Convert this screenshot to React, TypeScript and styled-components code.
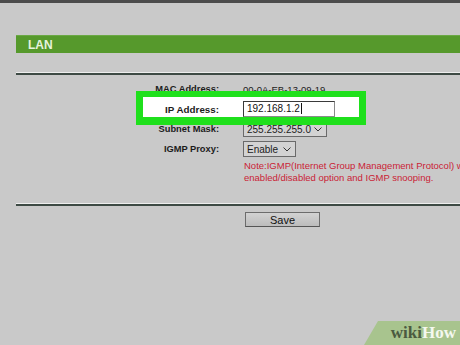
import styled, { createGlobalStyle } from "styled-components";

const GlobalStyle = createGlobalStyle`
  html, body {
    margin: 0;
    padding: 0;
    background: #c9c9c9;
    font-family: "Liberation Sans", Arial, sans-serif;
  }
`;

const Page = styled.div`
  position: relative;
  width: 460px;
  height: 345px;
  overflow: hidden;
  background: #c9c9c9;
`;

const TopBar = styled.div`
  height: 3px;
  background: #4c4c4c;
`;

const Content = styled.div`
  padding-left: 16px;
`;

const SectionHeader = styled.div`
  margin-top: 32px;
  height: 18px;
  display: flex;
  align-items: center;
  padding-left: 12px;
  background: #56992c;
  border-top: 1px solid #6aa844;
  box-sizing: border-box;
  color: #e6f3dc;
  font-size: 12px;
  font-weight: bold;
`;

const Divider = styled.div<{ $gap: number }>`
  margin-top: ${(p) => p.$gap}px;
  border-top: 1px solid #eeeeee;
  border-bottom: 2px solid #3d4a44;
`;

const Form = styled.div`
  margin-top: 4px;
`;

const Row = styled.div<{ $highlight?: boolean }>`
  position: relative;
  display: grid;
  grid-template-columns: 203px 1fr;
  column-gap: 24px;
  align-items: center;
  height: 20px;
  z-index: ${(p) => (p.$highlight ? 1 : 0)};

  ${(p) =>
    p.$highlight &&
    `
    &::before {
      content: "";
      position: absolute;
      left: 120px;
      top: -8px;
      width: 230px;
      height: 34px;
      box-sizing: border-box;
      border-style: solid;
      border-color: #1fe01c;
      border-width: 6px 7px 8px 7px;
      background: #ffffff;
      z-index: -1;
    }
  `}
`;

const Label = styled.div<{ $big?: boolean }>`
  text-align: right;
  font-weight: bold;
  font-size: ${(p) => (p.$big ? 9.8 : 9.3)}px;
  color: #1c1c1c;
`;

const Value = styled.div`
  font-size: 9.5px;
  color: #1c1c1c;
`;

const TextInput = styled.div`
  width: 92px;
  height: 16px;
  box-sizing: border-box;
  border: 1px solid #8a8a8a;
  border-top-color: #3a3a3a;
  border-left-color: #3a3a3a;
  background: #ffffff;
  font-size: 10px;
  line-height: 14px;
  padding-left: 3px;
  color: #111;
`;

const Caret = styled.span`
  display: inline-block;
  width: 1px;
  height: 11px;
  margin-left: 1px;
  background: #111;
  vertical-align: -2px;
`;

const Select = styled.div<{ $width: number }>`
  width: ${(p) => p.$width}px;
  height: 16px;
  box-sizing: border-box;
  border: 1px solid #6a6a6a;
  background: #d3d3d3;
  display: flex;
  align-items: center;
  justify-content: space-between;
  padding: 0 4px 0 3px;
  font-size: 10px;
  color: #1c1c1c;
`;

const Note = styled.div`
  margin-top: 1px;
  display: grid;
  grid-template-columns: 203px 1fr;
  column-gap: 25px;
  font-size: 9.5px;
  line-height: 12px;
  color: #c91d36;
  white-space: nowrap;
`;

const SaveRow = styled.div`
  margin-top: 6px;
  padding-left: 229px;
`;

const SaveButton = styled.div`
  width: 75px;
  height: 15px;
  box-sizing: border-box;
  border: 1px solid #6c6c6c;
  border-bottom-color: #555;
  background: linear-gradient(#d2d2d2, #bcbcbc);
  display: flex;
  align-items: center;
  justify-content: center;
  font-size: 11px;
  color: #111;
`;

const WikiBadge = styled.div`
  position: absolute;
  right: 0;
  bottom: 0;
  width: 96px;
  height: 24px;
  background: #a8c48e;
  clip-path: polygon(14px 0, 100% 0, 100% 100%, 0 100%);
  display: flex;
  align-items: center;
  justify-content: flex-end;
  padding-right: 4px;
  box-sizing: border-box;
  font-family: "Liberation Serif", "DejaVu Serif", serif;
  font-weight: bold;
  font-size: 17px;
`;

const Wiki = styled.span`
  color: #4b5a40;
`;

const How = styled.span`
  color: #f4f8ef;
`;

const Chevron = () => (
  <svg width="8" height="5" viewBox="0 0 8 5">
    <polyline points="0.5,0.5 4,4 7.5,0.5" fill="none" stroke="#333" strokeWidth="1" />
  </svg>
);

export default function App() {
  return (
    <Page>
      <GlobalStyle />
      <TopBar />
      <Content>
        <SectionHeader>LAN</SectionHeader>
        <Divider $gap={19} />
        <Form>
          <Row>
            <Label>MAC Address:</Label>
            <Value>00-0A-EB-13-09-19</Value>
          </Row>
          <Row $highlight>
            <Label $big>IP Address:</Label>
            <TextInput>
              192.168.1.2
              <Caret />
            </TextInput>
          </Row>
          <Row>
            <Label>Subnet Mask:</Label>
            <Select $width={84}>
              <span>255.255.255.0</span>
              <Chevron />
            </Select>
          </Row>
          <Row>
            <Label>IGMP Proxy:</Label>
            <Select $width={53}>
              <span>Enable</span>
              <Chevron />
            </Select>
          </Row>
          <Note>
            <span />
            <div>
              Note:IGMP(Internet Group Management Protocol) works only with an
              <br />
              enabled/disabled option and IGMP snooping.
            </div>
          </Note>
        </Form>
        <Divider $gap={19} />
        <SaveRow>
          <SaveButton>Save</SaveButton>
        </SaveRow>
      </Content>
      <WikiBadge>
        <Wiki>wiki</Wiki>
        <How>How</How>
      </WikiBadge>
    </Page>
  );
}
